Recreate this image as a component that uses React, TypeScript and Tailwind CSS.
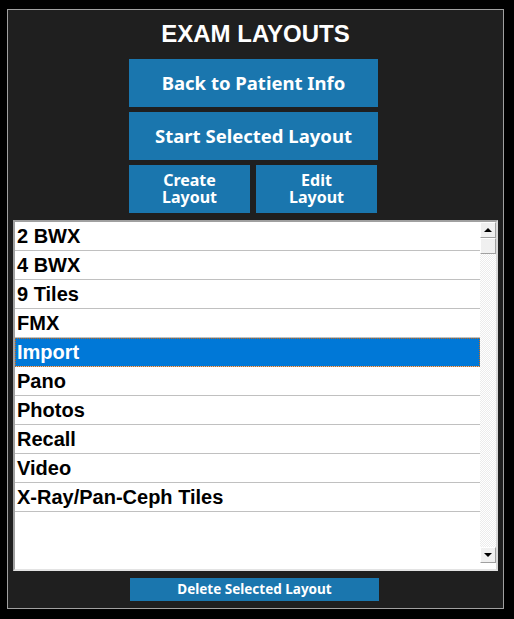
import React from 'react';

const LAYOUTS = ['2 BWX', '4 BWX', '9 Tiles', 'FMX', 'Import', 'Pano', 'Photos', 'Recall', 'Video', 'X-Ray/Pan-Ceph Tiles'];
const SELECTED = 'Import';

const btn = "bg-[#1a76ae] text-white font-bold font-['Noto_Sans',sans-serif] flex flex-col items-center justify-center text-center";

const ScrollButton = ({ up }: { up?: boolean }) => (
  <div className="h-[16px] w-[16px] bg-[#f0f0f0] border-t border-l border-t-white border-l-white border-r border-b border-r-[#a0a0a0] border-b-[#a0a0a0] flex items-center justify-center">
    {up ? (
      <div className="w-0 h-0 border-l-[4px] border-r-[4px] border-b-[4px] border-l-transparent border-r-transparent border-b-black" />
    ) : (
      <div className="w-0 h-0 border-l-[4px] border-r-[4px] border-t-[4px] border-l-transparent border-r-transparent border-t-black" />
    )}
  </div>
);

const App: React.FC = () => {
  return (
    <div className="w-[514px] h-[619px] bg-black pt-[9px] pl-[7px]">
      <div className="w-[497px] h-[600px] border border-[#a0a0a0] bg-[#1f1f1f] flex flex-col">
        <h1 className="mt-[11px] text-center text-white font-bold text-[24px] leading-[26px] font-['Liberation_Sans',Arial,sans-serif]">
          EXAM LAYOUTS
        </h1>

        <div className="mt-[12px] ml-[121px] w-[249px] flex flex-col gap-[5px]">
          <button className={`${btn} h-[48px] text-[18.5px]`}>Back to Patient Info</button>
          <button className={`${btn} h-[48px] text-[18.5px]`}>Start Selected Layout</button>
          <div className="flex gap-[6px]">
            <button className={`${btn} h-[48px] w-[121px] text-[16px] leading-[17px]`}>
              <span>Create</span>
              <span>Layout</span>
            </button>
            <button className={`${btn} h-[48px] w-[121px] text-[16px] leading-[17px]`}>
              <span>Edit</span>
              <span>Layout</span>
            </button>
          </div>
        </div>

        {/* layout list */}
        <div className="mt-[7px] ml-[5px] w-[485px] h-[351px] bg-white border-2 border-t-[#a0a0a0] border-l-[#a0a0a0] border-r-[#d8d8d8] border-b-[#e3e3e3] flex">
          <ul className="flex-1 font-['Liberation_Sans',Arial,sans-serif] font-bold text-[20px]">
            {LAYOUTS.map((name) => {
              const sel = name === SELECTED;
              return (
                <li
                  key={name}
                  className={`h-[29px] leading-[28px] pl-[2px] border-b border-[#c0c0c0] ${
                    sel ? 'bg-[#0078d7] text-white outline-1 outline-dotted outline-[#c26a1f] -outline-offset-1' : 'text-black'
                  }`}
                >
                  {name}
                </li>
              );
            })}
          </ul>
          <div className="w-[16px] flex flex-col pb-[6px]">
            <ScrollButton up />
            <div className="h-[16px] bg-[#f0f0f0] border-t border-l border-t-white border-l-white border-r border-b border-r-[#a0a0a0] border-b-[#a0a0a0]" />
            <div className="flex-1 bg-[repeating-conic-gradient(#ececec_0%_25%,#ffffff_0%_50%)] bg-[length:2px_2px]" />
            <ScrollButton />
          </div>
        </div>

        <button className={`${btn} mt-[7px] ml-[122px] w-[249px] h-[23px] text-[13.5px]`}>Delete Selected Layout</button>
      </div>
    </div>
  );
};

export default App;
